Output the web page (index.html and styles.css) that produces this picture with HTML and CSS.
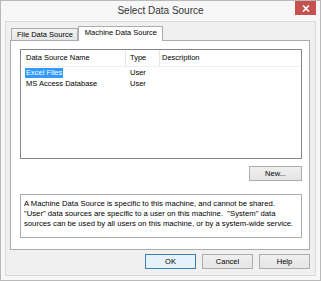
FILE: index.html
```html
<!DOCTYPE html>
<html>
<head>
<meta charset="utf-8">
<link rel="stylesheet" href="styles.css">
</head>
<body>
<div class="window">
  <div class="titlebar">
    <span></span>
    <span class="title">Select Data Source</span>
    <span class="close"><svg width="8" height="7" viewBox="0 0 8 7"><path d="M1 0.5L7 6.5M7 0.5L1 6.5" stroke="#fff" stroke-width="1.6"/></svg></span>
  </div>
  <div class="client">
    <div class="tabs">
      <div class="tab">File Data Source</div>
      <div class="tab active">Machine Data Source</div>
    </div>
    <div class="panel">
      <div class="list">
        <div class="row head">
          <div class="c1">Data Source Name</div>
          <div class="c2">Type</div>
          <div class="c3">Description</div>
        </div>
        <div class="row">
          <div class="c1"><span class="sel">Excel Files</span></div>
          <div class="c2">User</div>
          <div class="c3"></div>
        </div>
        <div class="row">
          <div class="c1"><span class="nosel">MS Access Database</span></div>
          <div class="c2">User</div>
          <div class="c3"></div>
        </div>
      </div>
      <div class="newrow"><button class="btn new">New...</button></div>
      <div class="desc">A Machine Data Source is specific to this machine, and cannot be shared.<br>"User" data sources are specific to a user on this machine.&nbsp; "System" data<br>sources can be used by all users on this machine, or by a system-wide service.</div>
    </div>
    <div class="buttons">
      <button class="btn default">OK</button>
      <button class="btn">Cancel</button>
      <button class="btn">Help</button>
    </div>
  </div>
</div>
</body>
</html>
```
FILE: styles.css
```css
* { box-sizing: border-box; }
html, body { margin: 0; padding: 0; background: #fff; }
body { font-family: "Liberation Sans", Arial, sans-serif; font-size: 7.5px; color: #000; }
.window {
  width: 321px; height: 281px;
  border: 1px solid #b9b9b9;
  background: #f7f7f7;
  display: flex; flex-direction: column;
}
.titlebar {
  height: 20px;
  display: grid;
  grid-template-columns: 1fr auto 1fr;
  align-items: start;
}
.title { font-size: 10px; color: #333; padding-top: 4px; }
.close {
  justify-self: end;
  width: 21px; height: 14px;
  margin-right: 4px;
  background: #c75050;
  display: flex; align-items: center; justify-content: center;
}
.close svg { display: block; }
.client {
  flex: 1;
  margin: 0 4px 4px 4px;
  border: 1px solid #dadada;
  background: #f0f0f0;
  padding: 4px 5px 0 4px;
  display: flex; flex-direction: column;
}
.tabs { display: flex; align-items: flex-end; height: 14px; position: relative; z-index: 1; }
.tab {
  height: 12px;
  margin-left: 1px;
  padding: 0 4px 0 5px;
  border: 1px solid #acacac; border-bottom: none;
  background: linear-gradient(#f2f2f2, #e6e6e6);
  line-height: 11px;
  white-space: nowrap;
}
.tab.active {
  height: 15px; margin-left: 0; margin-bottom: -1px;
  padding: 0 5px 0 6px;
  background: #fff;
  line-height: 12px;
}
.panel {
  width: 300px;
  height: 210px;
  border: 1px solid #acacac;
  background: #fff;
  padding: 8px 7px 0 9px;
}
.list {
  height: 110px;
  border: 1px solid #828790;
  background: #fff;
}
.row { display: grid; grid-template-columns: 105px 34px 1fr; height: 11px; line-height: 11px; }
.row.head { height: 17px; line-height: 16px; border-bottom: 1px solid #f0f0f0; }
.row.head .c1 { padding-left: 5px; border-right: 1px solid #e5e5e5; }
.row.head .c2 { padding-left: 4px; border-right: 1px solid #e5e5e5; }
.row.head .c3 { padding-left: 2px; }
.row .c1 { padding-left: 4px; }
.row .c2 { padding-left: 4px; }
.sel { background: #3399ff; color: #fff; padding: 0 1px; display: inline-block; height: 10px; line-height: 10px; }
.nosel { padding: 0 1px; }
.newrow { display: flex; justify-content: flex-end; margin-top: 7px; }
.btn {
  font-family: inherit; font-size: 7.5px; color: #000;
  width: 51px; height: 15px; padding: 0; margin: 0;
  border: 1px solid #acacac;
  background: linear-gradient(#f0f0f0, #e5e5e5);
  line-height: 13px;
}
.btn.new { width: 53px; }
.btn.default { border-color: #3c7fb1; background: #e5f1fb; }
.desc {
  margin-top: 13px;
  height: 44px;
  border: 1px solid #abadb3;
  background: #fff;
  padding: 4px 3px 0 3px;
  font-size: 7.7px;
  line-height: 10px;
  white-space: nowrap;
}
.buttons { display: flex; justify-content: flex-end; gap: 6px; margin-top: 4px; }
```
